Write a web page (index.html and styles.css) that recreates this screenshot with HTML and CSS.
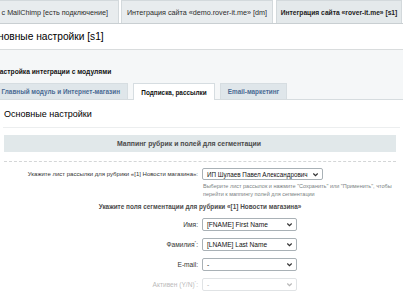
FILE: index.html
```html
<!DOCTYPE html>
<html lang="ru">
<head>
  <meta charset="UTF-8" />
  <meta name="viewport" content="width=device-width, initial-scale=1.0" />
  <title>Интеграция с MailChimp</title>
  <link rel="stylesheet" href="styles.css">
</head>
<body>

  <nav class="site-tabs">
    <a class="site-tab first">Связь с MailChimp [есть подключение]</a>
    <a class="site-tab second">Интеграция сайта «demo.rover-it.me» [dm]</a>
    <a class="site-tab active">Интеграция сайта «rover-it.me» [s1]</a>
  </nav>

  <header class="page-head">
    <h1>Основные настройки [s1]</h1>
  </header>

  <section class="settings">
    <h2 class="section-title">Настройка интеграции с модулями</h2>

    <div class="module-tabs">
      <a class="module-tab first">Главный модуль и Интернет-магазин</a>
      <a class="module-tab active">Подписка, рассылки</a>
      <a class="module-tab last">Email-маркетинг</a>
    </div>

    <div class="panel">
      <h3 class="panel-title">Основные настройки</h3>

      <div class="band">Маппинг рубрик и полей для сегментации</div>
      <div class="dashed"></div>

      <div class="list-row">
        <label class="label small">Укажите лист рассылки для рубрики «[1] Новости магазина»:</label>
        <div class="select wide">
          <span>ИП Шулаев Павел Александрович</span>
          <svg viewBox="0 0 8 8" width="7" height="7"><path d="M1.5 2.8 4 5.3 6.5 2.8" fill="none" stroke="#333" stroke-width="1.4"/></svg>
        </div>
      </div>
      <p class="hint">Выберите лист рассылок и нажмите "Сохранить" или "Применить", чтобы<br>перейти к маппингу полей для сегментации</p>

      <h4 class="sub-title">Укажите поля сегментации для рубрики «[1] Новости магазина»</h4>

      <div class="fields">
        <label class="label">Имя:</label>
        <div class="select">
          <span>[FNAME] First Name</span>
          <svg viewBox="0 0 8 8" width="7" height="7"><path d="M1.5 2.8 4 5.3 6.5 2.8" fill="none" stroke="#333" stroke-width="1.4"/></svg>
        </div>

        <label class="label">Фамилия<sup>*</sup>:</label>
        <div class="select">
          <span>[LNAME] Last Name</span>
          <svg viewBox="0 0 8 8" width="7" height="7"><path d="M1.5 2.8 4 5.3 6.5 2.8" fill="none" stroke="#333" stroke-width="1.4"/></svg>
        </div>

        <label class="label">E-mail:</label>
        <div class="select">
          <span>-</span>
          <svg viewBox="0 0 8 8" width="7" height="7"><path d="M1.5 2.8 4 5.3 6.5 2.8" fill="none" stroke="#333" stroke-width="1.4"/></svg>
        </div>

        <label class="label muted">Активен (Y/N)<sup>*</sup>:</label>
        <div class="select muted">
          <span>-</span>
          <svg viewBox="0 0 8 8" width="7" height="7"><path d="M1.5 2.8 4 5.3 6.5 2.8" fill="none" stroke="#333" stroke-width="1.4"/></svg>
        </div>
      </div>
    </div>
  </section>

</body>
</html>
```

FILE: styles.css
```css
body {
  margin: 0;
  font-family: "Liberation Sans", Arial, sans-serif;
  background-color: #f5f7f8;
  color: #000;
  overflow: hidden;
}

/* top site tabs */
.site-tabs {
  display: flex;
  gap: 2px;
  height: 23px;
  background-color: #fff;
  border-bottom: 1px solid #c9cfd2;
}

.site-tab {
  display: flex;
  align-items: center;
  justify-content: center;
  flex-shrink: 0;
  height: 23px;
  box-sizing: border-box;
  font-size: 7.2px;
  white-space: nowrap;
  color: #2b2b2b;
  background-color: #e8ecee;
  border: 1px solid #d3d9dc;
  border-bottom: none;
}

.site-tab.first {
  width: 200px;
  margin-left: -81px;
  justify-content: flex-end;
  padding-right: 10px;
}

.site-tab.second {
  width: 152px;
}

.site-tab.active {
  width: 126px;
  margin-left: 1px;
  font-weight: bold;
  font-size: 6.7px;
  color: #222;
  background-color: #e4e9eb;
}

/* page heading */
.page-head {
  height: 25px;
  background-color: #fff;
  border-bottom: 1px solid #d9dcdd;
}

.page-head h1 {
  margin: 0 0 0 -15px;
  font-size: 10.2px;
  font-weight: normal;
  line-height: 25px;
  white-space: nowrap;
}

/* module settings */
.settings {
  padding-top: 17px;
}

.section-title {
  margin: 0 0 6px -5px;
  font-size: 6.7px;
  line-height: 10px;
  font-weight: bold;
  color: #111;
  white-space: nowrap;
}

.module-tabs {
  display: flex;
  gap: 5px;
  height: 16px;
}

.module-tab {
  display: flex;
  align-items: center;
  justify-content: center;
  flex-shrink: 0;
  box-sizing: border-box;
  height: 16px;
  font-size: 6.4px;
  font-weight: bold;
  white-space: nowrap;
  color: #4a6a93;
  background-color: #dfe6ea;
  border: 1px solid #d6dde1;
  border-bottom: none;
}

.module-tab.first {
  width: 133px;
  margin-left: -5px;
  justify-content: flex-end;
  padding-right: 7px;
}

.module-tab.active {
  width: 82px;
  height: 17px;
  color: #111;
  background-color: #fff;
  position: relative;
  z-index: 1;
}

.module-tab.last {
  width: 67px;
}

.panel {
  background-color: #fff;
  border-top: 1px solid #d6dcdf;
  padding: 0 7px 40px 4px;
}

.panel-title {
  margin: 0 -4px 0 -1px;
  padding: 7px 0 0 1px;
  box-sizing: border-box;
  height: 28px;
  font-size: 9px;
  font-weight: normal;
  line-height: 14px;
  border-bottom: 1px solid #eceeef;
}

.band {
  margin-top: 7px;
  padding-right: 22px;
  height: 17px;
  line-height: 17px;
  text-align: center;
  font-size: 6.9px;
  font-weight: bold;
  color: #4b4b4b;
  background-color: #e1e8ea;
}

.dashed {
  margin-top: 9px;
  border-top: 1px dashed #d4d6d7;
}

.list-row {
  display: grid;
  grid-template-columns: 194px auto;
  column-gap: 4px;
  align-items: center;
  margin-top: 6px;
}

.label {
  text-align: right;
  font-size: 6.6px;
  white-space: nowrap;
  color: #333;
}

.label.small {
  font-size: 6px;
}

.label sup {
  font-size: 4px;
}

.select {
  display: flex;
  align-items: center;
  justify-content: space-between;
  box-sizing: border-box;
  width: 95px;
  height: 13px;
  padding: 0 3px 0 4px;
  font-size: 6.6px;
  white-space: nowrap;
  overflow: hidden;
  color: #111;
  background-color: #fff;
  border: 1px solid #a9b1b6;
  border-radius: 2px;
}

.select svg {
  flex-shrink: 0;
}

.select.wide {
  width: 121px;
  height: 12px;
  font-size: 6.3px;
}

.hint {
  margin: 3px 0 0 199px;
  font-size: 5.5px;
  line-height: 7.5px;
  color: #7a7f82;
  white-space: nowrap;
}

.sub-title {
  margin: 4px 0 0;
  text-align: center;
  font-size: 6.4px;
  line-height: 10px;
  font-weight: bold;
  color: #4b4b4b;
}

.fields {
  display: grid;
  grid-template-columns: 194px auto;
  column-gap: 4px;
  row-gap: 7px;
  align-items: center;
  margin-top: 6px;
}

.muted {
  opacity: 0.35;
}
```
